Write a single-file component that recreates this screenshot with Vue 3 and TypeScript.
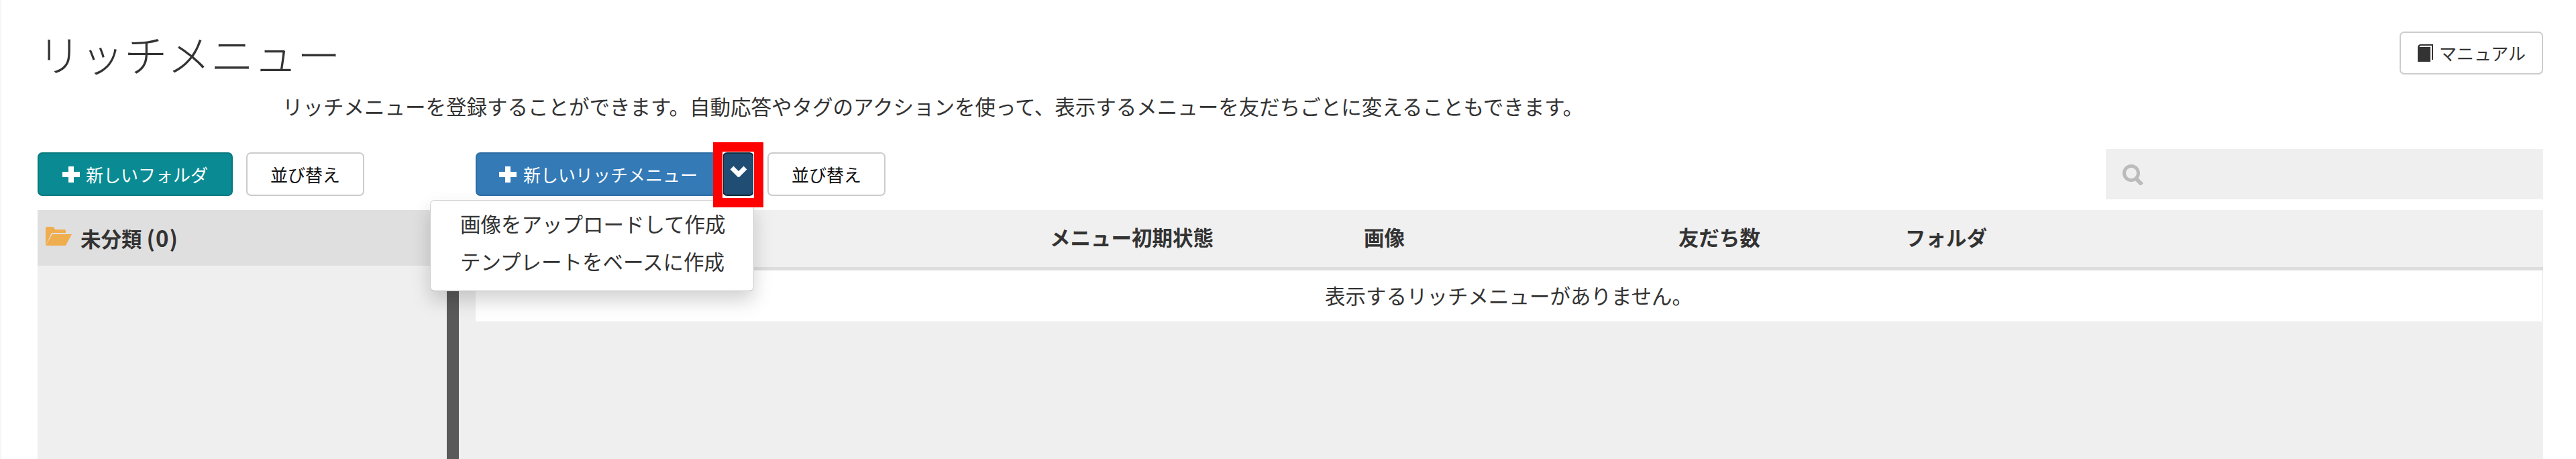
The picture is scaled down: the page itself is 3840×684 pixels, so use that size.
<script setup lang="ts">
import { ref } from 'vue'

const keyword = ref('')
const menuItems: string[] = ['画像をアップロードして作成', 'テンプレートをベースに作成']
const columns: string[] = ['', 'メニュー初期状態', '画像', '友だち数', 'フォルダ']
</script>

<template>
  <div class="page">
    <header class="head">
      <h1 class="title">リッチメニュー</h1>
      <button class="btn btn-default btn-manual">
        <svg class="icon-book" viewBox="0 0 24 26">
          <path d="M1 5q0-5 5-5h18v23h-2V2H6q-2 0-2.500 2H20v22H1z" fill="#333" />
        </svg>
        マニュアル
      </button>
    </header>

    <p class="desc">リッチメニューを登録することができます。自動応答やタグのアクションを使って、表示するメニューを友だちごとに変えることもできます。</p>

    <div class="toolbar">
      <div class="folder-tools">
        <button class="btn btn-teal">
          <svg class="icon-plus" viewBox="0 0 26 24"><path d="M13 0v24M0 12h26" stroke="#fff" stroke-width="8" /></svg>
          新しいフォルダ
        </button>
        <button class="btn btn-default btn-sort">並び替え</button>
      </div>

      <div class="menu-tools">
        <div class="split">
          <button class="btn btn-blue">
            <svg class="icon-plus" viewBox="0 0 26 24"><path d="M13 0v24M0 12h26" stroke="#fff" stroke-width="8" /></svg>
            新しいリッチメニュー
          </button>
          <button class="btn btn-caret">
            <svg class="icon-chevron" viewBox="0 0 26 17"><path d="M3 3l10 10L23 3" fill="none" stroke="#fff" stroke-width="7" /></svg>
            <span class="highlight"></span>
          </button>
          <ul class="dropdown">
            <li v-for="item in menuItems" :key="item">{{ item }}</li>
          </ul>
        </div>
        <button class="btn btn-default btn-sort">並び替え</button>
      </div>

      <label class="search">
        <svg class="icon-search" viewBox="0 0 32 31">
          <circle cx="13" cy="13" r="10.500" fill="none" stroke="#bbb" stroke-width="5" />
          <path d="M20 21l9 9" stroke="#bbb" stroke-width="6" />
        </svg>
        <input v-model="keyword" type="text" />
      </label>
    </div>

    <div class="content">
      <aside class="sidebar">
        <div class="folder-row">
          <svg class="icon-folder" viewBox="0 0 39 28">
            <path d="M0 28V2q0-2 2-2h8q2 0 3 2l1 2h14q2 0 2 2v3H9z" fill="#f0ad4e" />
            <path d="M10 11h29L30 28H0z" fill="#f0ad4e" />
          </svg>
          <span>未分類 <span class="count">(0)</span></span>
        </div>
      </aside>
      <div class="divider"></div>
      <main class="main">
        <div class="table-head">
          <span v-for="col in columns" :key="col">{{ col }}</span>
        </div>
        <div class="table-empty">表示するリッチメニューがありません。</div>
      </main>
    </div>
  </div>
</template>

<style scoped>
.page {
  box-sizing: border-box;
  height: 684px;
  overflow: hidden;
  padding: 47px 49px 0 54px;
  border-left: 2px solid #f5f5f5;
  color: #333;
  font-family: "Noto Sans CJK JP", "Liberation Sans", sans-serif;
  font-size: 30.5px;
}

.head {
  display: flex;
  justify-content: space-between;
  align-items: center;
  height: 64px;
}

.title {
  margin: 0;
  font-size: 64.5px;
  font-weight: 300;
  line-height: 64px;
}

.desc {
  margin: 27px 0 0 365px;
  line-height: 40px;
  white-space: nowrap;
}

.btn {
  box-sizing: border-box;
  display: flex;
  align-items: center;
  justify-content: center;
  height: 65px;
  padding: 0;
  border: 2px solid transparent;
  border-radius: 7px;
  font-family: inherit;
  font-size: 26px;
  line-height: 1;
  white-space: nowrap;
}

.btn-default {
  background: #fff;
  border-color: #ccc;
  color: #111;
}

.btn-sort {
  width: 176px;
}

.btn-manual {
  width: 214px;
  height: 64px;
  gap: 9px;
  color: #333;
}

.btn-teal {
  width: 291px;
  gap: 9px;
  background: #0a8b93;
  border-color: #09797f;
  color: #fff;
}

.btn-blue {
  width: 362px;
  padding-left: 33px;
  justify-content: flex-start;
  gap: 10px;
  background: #337ab7;
  border-color: #2e6da4;
  color: #fff;
}

.btn-caret {
  position: relative;
  width: 47px;
  margin-left: 6px;
  padding-bottom: 9px;
  background: #204d74;
  border-color: #122b40;
}

.highlight {
  position: absolute;
  z-index: 3;
  top: -17px;
  left: -16px;
  right: -16px;
  bottom: -19px;
  border: 14px solid #f00;
  outline: 1px solid #fff;
  outline-offset: -15px;
}

.icon-plus {
  width: 26px;
  height: 24px;
}

.icon-chevron {
  width: 26px;
  height: 17px;
}

.icon-book {
  width: 24px;
  height: 26px;
}

.toolbar {
  display: flex;
  align-items: center;
  height: 75px;
  margin-top: 44px;
}

.folder-tools,
.menu-tools {
  display: flex;
  gap: 20px;
}

.menu-tools {
  margin-left: 166px;
}

.split {
  position: relative;
  display: flex;
}

.dropdown {
  box-sizing: border-box;
  position: absolute;
  z-index: 2;
  top: 71px;
  left: -68px;
  width: 483px;
  height: 136px;
  margin: 0;
  padding: 6px 0 0 44px;
  list-style: none;
  background: #fff;
  border: 1px solid #d0d0d0;
  border-bottom-color: #bbb;
  border-radius: 7px;
  box-shadow: 0 14px 29px rgba(0, 0, 0, 0.175);
  line-height: 56px;
  white-space: nowrap;
}

.search {
  display: flex;
  align-items: center;
  width: 652px;
  height: 75px;
  margin-left: auto;
  padding-left: 25px;
  box-sizing: border-box;
  gap: 12px;
  background: #efefef;
}

.icon-search {
  flex: none;
  width: 32px;
  height: 31px;
  margin-top: 1px;
}

.search input {
  flex: 1;
  min-width: 0;
  border: 0;
  outline: 0;
  background: transparent;
  font-size: 26px;
}

.content {
  display: flex;
  height: 371px;
  margin-top: 16px;
}

.sidebar {
  flex: none;
  width: 610px;
  background: #efefef;
}

.folder-row {
  display: flex;
  align-items: center;
  gap: 13px;
  height: 83px;
  padding-left: 12px;
  background: #dfdfdf;
  font-weight: 700;
  line-height: 1;
}

.count {
  letter-spacing: 1px;
  font-size: 33px;
}

.icon-folder {
  width: 39px;
  height: 28px;
  margin-top: -6px;
}

.divider {
  flex: none;
  width: 18px;
  background: #5a5a5a;
}

.main {
  flex: 1;
  padding-left: 25px;
  background: #efefef;
}

.table-head {
  display: grid;
  grid-template-columns: 856px 468px 469px 338px 1fr;
  align-items: center;
  box-sizing: border-box;
  height: 90px;
  padding-bottom: 5px;
  border-bottom: 5px solid #ddd;
  background: #f0f0f0;
  font-weight: 700;
  line-height: 1;
}

.table-empty {
  margin-right: 2px;
  height: 76px;
  background: #fff;
  text-align: center;
  line-height: 74px;
}
</style>

<style>
html,
body {
  background: #fff;
}
</style>
